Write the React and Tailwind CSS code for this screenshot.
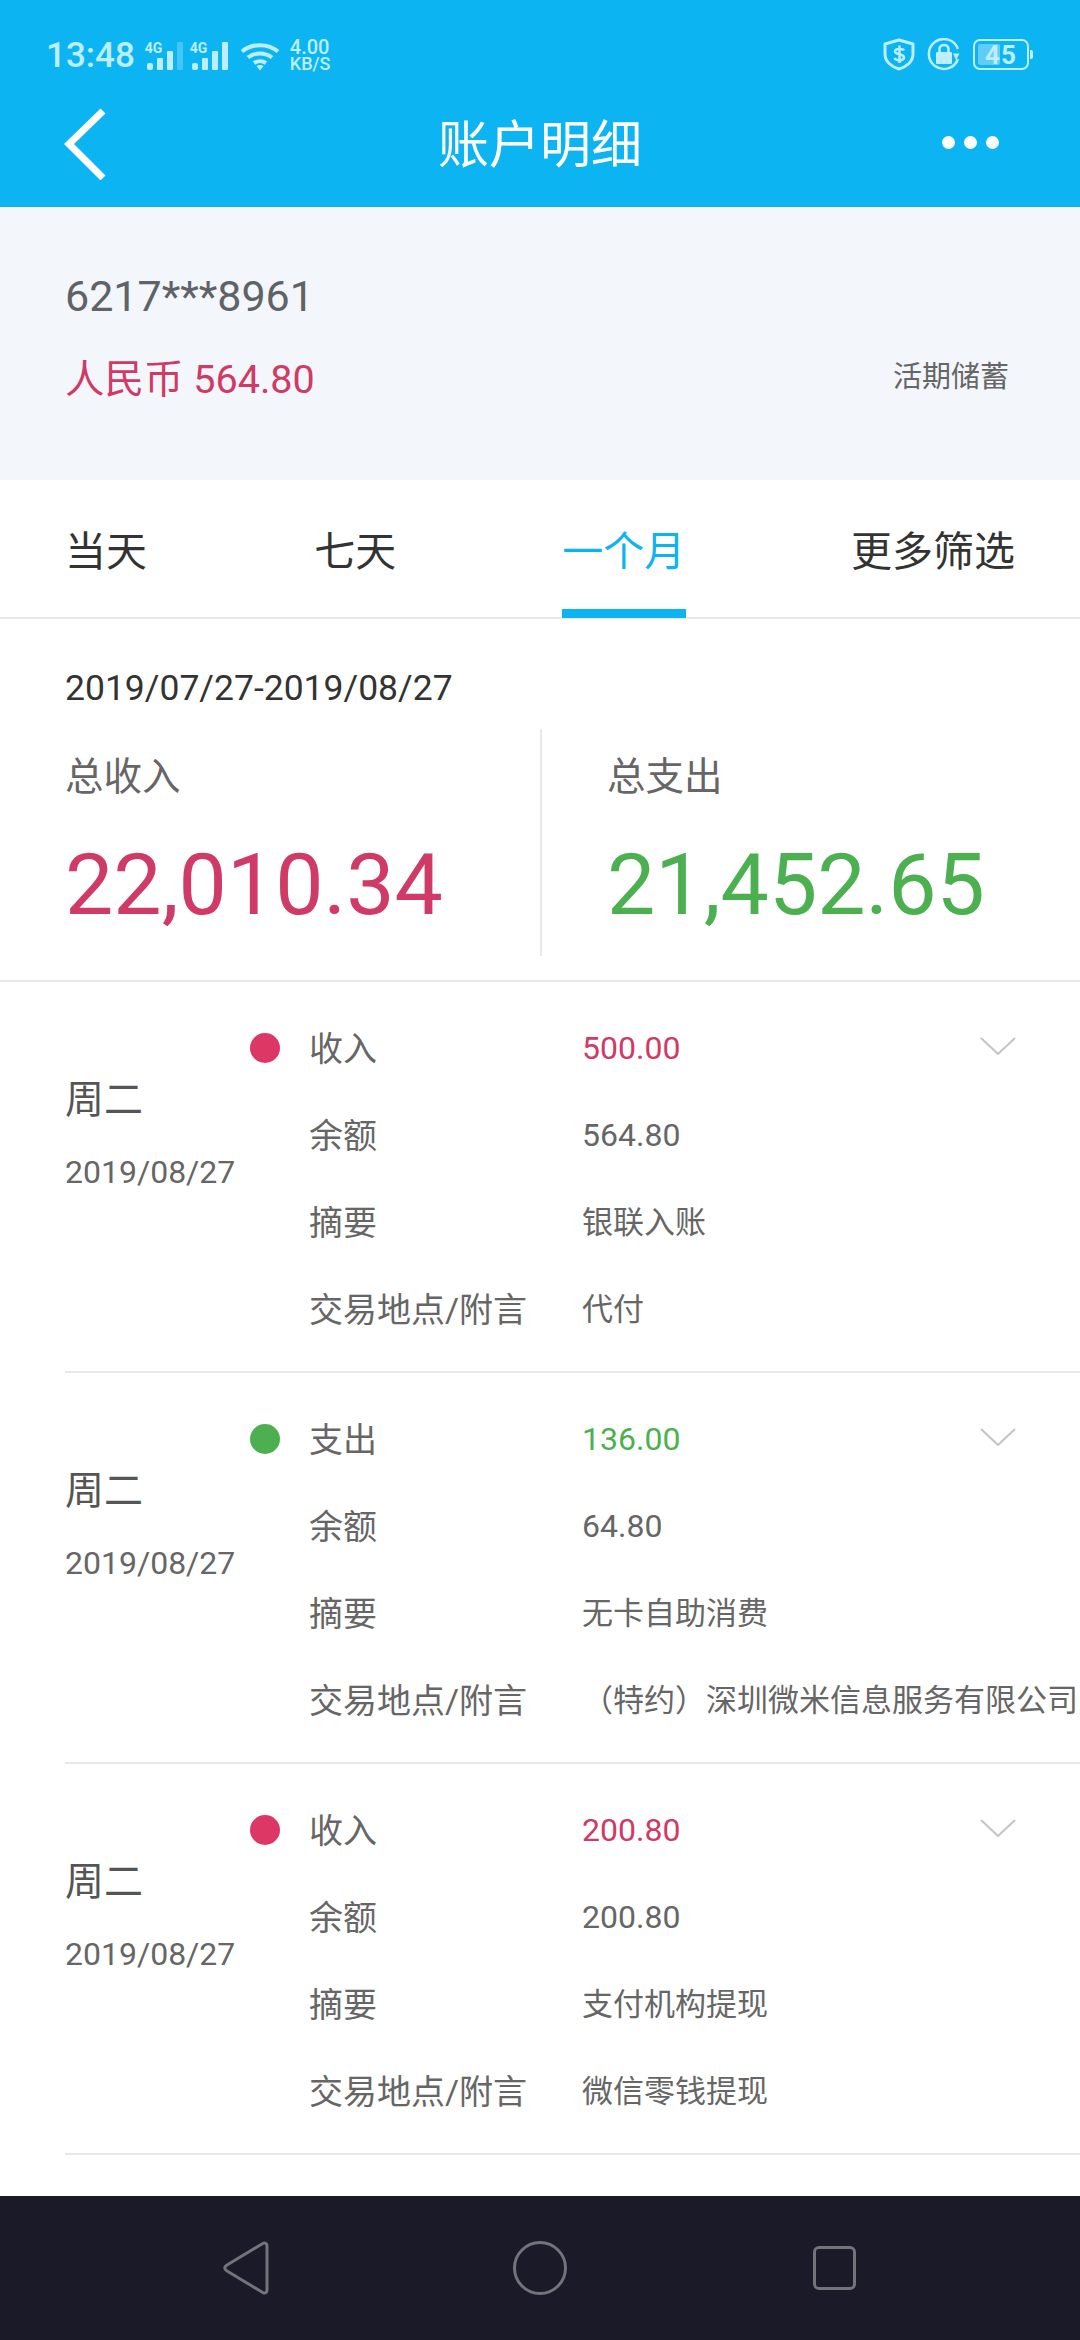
const FONT = "font-['Roboto','Noto_Sans_CJK_SC',sans-serif]";

function Signal({ faded }) {
  return (
    <div className="relative w-[38px] h-[29px]">
      <span className="absolute left-[-1px] top-[-1px] text-[14px] leading-[14px] font-bold">4G</span>
      <svg className="absolute left-0 top-0" width="38" height="29" viewBox="0 0 38 29" fill="currentColor">
        <rect x="1" y="21" width="6" height="7" rx="2" />
        <rect x="11" y="16" width="6" height="12" rx="1" />
        <rect x="21" y="9" width="6" height="19" rx="1" />
        <rect x="31" y="0" width="6" height="28" rx="1" opacity={faded ? 0.3 : 1} />
      </svg>
    </div>
  );
}

function Wifi() {
  return (
    <svg width="40" height="29" viewBox="0 0 40 29" fill="none" stroke="currentColor" strokeWidth="4">
      <path d="M2 9.500C12 1 28 1 38 9.500" />
      <path d="M8 15.500C15 10 25 10 32 15.500" />
      <path d="M14 21C17.500 18.500 22.500 18.500 26 21" />
      <path d="M16.500 24L20 28.500L23.500 24C21.500 22.500 18.500 22.500 16.500 24Z" fill="currentColor" stroke="none" />
    </svg>
  );
}

function StatusBar() {
  return (
    <div className="h-[75px] pl-[46px] pr-[47px] flex items-end pb-[4px] text-[#bdeeff]">
      <span className="text-[35px] leading-[35px] font-medium mb-[-2px]">13:48</span>
      <div className="ml-[11px] flex gap-[7px]">
        <Signal faded />
        <Signal />
      </div>
      <div className="ml-[11px]"><Wifi /></div>
      <div className="ml-[10px] flex flex-col font-medium leading-none">
        <span className="text-[20px] leading-[18px]">4.00</span>
        <span className="text-[18px] leading-[15px]">KB/S</span>
      </div>
      <div className="ml-auto flex items-center gap-[12px]">
        <svg width="32" height="33" viewBox="0 0 32 33" fill="none" stroke="currentColor" strokeWidth="3">
          <path d="M16 2L30 6V16C30 24 23 29 16 31C9 29 2 24 2 16V6Z" strokeLinejoin="round" />
          <path d="M21 12.500C20 10.500 12 10 12 13.500C12 17 21 15.500 21 19.500C21 23 13 23 11.500 20M16.500 7.500V25" strokeWidth="2.500" />
        </svg>
        <svg width="34" height="33" viewBox="0 0 34 33" fill="none" stroke="currentColor" strokeWidth="2.500">
          <path d="M31 21A15 15 0 1 1 31 11" />
          <path d="M29 22L32.500 15.500H26Z" fill="currentColor" stroke="none" />
          <rect x="9" y="14" width="16" height="12" rx="1" fill="currentColor" stroke="none" />
          <path d="M12.500 14V11C12.500 5.500 21.500 5.500 21.500 11V14" />
        </svg>
        <div className="flex items-center">
          <div className="relative w-[56px] h-[31px] rounded-[7px] border-2 border-current flex items-center justify-center">
            <div className="absolute left-[3px] top-[3px] bottom-[3px] w-[22px] bg-[#5fcdf8] rounded-[2px]" />
            <span className="relative text-[26px] leading-none font-bold tracking-[1px]">45</span>
          </div>
          <div className="w-[3px] h-[9px] bg-current rounded-r-[2px] ml-[1px]" />
        </div>
      </div>
    </div>
  );
}

function Header() {
  return (
    <div className="bg-[#0cb5f2] h-[207px]">
      <StatusBar />
      <div className="relative h-[132px] flex items-center justify-center">
        <svg className="absolute left-[62px] top-[33px]" width="46" height="72" viewBox="0 0 46 72" fill="none" stroke="#fff" strokeWidth="7">
          <path d="M41 3L7 36L41 70" />
        </svg>
        <span className="text-white text-[51px] leading-none mt-[8px]">账户明细</span>
        <div className="absolute left-[942px] top-[61px] flex gap-[9px]">
          <span className="w-[13px] h-[13px] rounded-full bg-white" />
          <span className="w-[13px] h-[13px] rounded-full bg-white" />
          <span className="w-[13px] h-[13px] rounded-full bg-white" />
        </div>
      </div>
    </div>
  );
}

function Account() {
  return (
    <div className="h-[273px] bg-[#f3f6fa] px-[65px] pt-[64px]">
      <p className="text-[43px] leading-[50px] text-[#5f6368]">6217***8961</p>
      <div className="flex items-center justify-between mt-[34px]">
        <p className="text-[39.500px] leading-[50px] text-[#cf3a66]">人民币 564.80</p>
        <p className="text-[29px] leading-[40px] text-[#666] mr-[6px] mb-[6px]">活期储蓄</p>
      </div>
    </div>
  );
}

function Tabs() {
  return (
    <div className="h-[139px] border-b-2 border-[#e8e8e8] flex justify-between px-[65px] text-[41px] text-[#333] whitespace-nowrap">
      <div className="pt-[44px] leading-[56px] w-[82px] shrink-0">当天</div>
      <div className="pt-[44px] leading-[56px] ml-[2px]">七天</div>
      <div className="pt-[44px] leading-[56px] h-[138px] text-[#0cb5f2] border-b-[9px] border-[#0cb5f2] w-[124px] text-center">一个月</div>
      <div className="pt-[44px] leading-[56px]">更多筛选</div>
    </div>
  );
}

function Summary() {
  return (
    <div className="border-b-2 border-[#e8e8e8] h-[363px] pt-[44px]">
      <p className="pl-[65px] text-[35.500px] leading-[50px] text-[#333]">2019/07/27-2019/08/27</p>
      <div className="flex mt-[16px]">
        <div className="w-[475px] ml-[65px] h-[227px] pt-[23px]">
          <p className="text-[38.500px] leading-[50px] text-[#666]">总收入</p>
          <p className="text-[86px] leading-[100px] mt-[33px] text-[#cf3a66]">22,010.34</p>
        </div>
        <div className="border-l-2 border-[#e8e8e8] pl-[65px] h-[227px] pt-[23px]">
          <p className="text-[38.500px] leading-[50px] text-[#666]">总支出</p>
          <p className="text-[86px] leading-[100px] mt-[33px] text-[#4cb050]">21,452.65</p>
        </div>
      </div>
    </div>
  );
}

const rows = [
  { type: "收入", color: "text-[#cf3a66]", dot: "bg-[#dd3766]", amount: "500.00", balance: "564.80", note: "银联入账", place: "代付" },
  { type: "支出", color: "text-[#4cb050]", dot: "bg-[#4cb050]", amount: "136.00", balance: "64.80", note: "无卡自助消费", place: "（特约）深圳微米信息服务有限公司" },
  { type: "收入", color: "text-[#cf3a66]", dot: "bg-[#dd3766]", amount: "200.80", balance: "200.80", note: "支付机构提现", place: "微信零钱提现" },
];

function Line({ label, value, valueClass = "text-[#666] text-[31px]" }) {
  return (
    <div className="h-[87px] flex items-center">
      <span className="w-[273px] shrink-0 text-[34px] text-[#666]">{label}</span>
      <span className={`whitespace-nowrap ${valueClass}`}>{value}</span>
    </div>
  );
}

function Row({ row }) {
  return (
    <div className="ml-[65px] h-[391px] border-b-2 border-[#e8e8e8] flex">
      <div className="w-[185px] shrink-0 pt-[93px]">
        <p className="text-[39px] leading-[50px] text-[#555]">周二</p>
        <p className="text-[32px] leading-[50px] mt-[22px] text-[#666]">2019/08/27</p>
      </div>
      <div className="w-[59px] shrink-0 pt-[51px]">
        <div className={`w-[30px] h-[30px] rounded-full ${row.dot}`} />
      </div>
      <div className="relative flex-1 pt-[24px]">
        <Line label={row.type} value={row.amount} valueClass={`text-[32px] mb-[3px] ${row.color}`} />
        <Line label="余额" value={row.balance} valueClass="text-[32px] mb-[3px] text-[#666]" />
        <Line label="摘要" value={row.note} />
        <Line label="交易地点/附言" value={row.place} />
        <svg className="absolute left-[671px] top-[55px]" width="36" height="18" viewBox="0 0 36 18" fill="none" stroke="#c4c4c4" strokeWidth="2">
          <path d="M1 1L18 17L35 1" />
        </svg>
      </div>
    </div>
  );
}

function NavBar() {
  return (
    <div className="mt-auto h-[144px] bg-[#1a1a28] flex items-start">
      <svg className="ml-[222px] mt-[44px]" width="48" height="56" viewBox="0 0 48 56" fill="none" stroke="#73737c" strokeWidth="3">
        <path d="M40 4C42 2 45 3 45 6V50C45 53 42 54 40 52L5 31C2 29 2 27 5 25Z" strokeLinejoin="round" />
      </svg>
      <div className="ml-[243px] mt-[45px] w-[54px] h-[54px] rounded-full border-[3px] border-[#73737c]" />
      <div className="ml-[246px] mt-[50px] w-[43px] h-[44px] rounded-[6px] border-[3px] border-[#73737c]" />
    </div>
  );
}

export default function App() {
  return (
    <div className={`w-[1080px] h-[2340px] bg-white flex flex-col overflow-hidden ${FONT}`}>
      <Header />
      <Account />
      <Tabs />
      <Summary />
      {rows.map((row, i) => (
        <Row key={i} row={row} />
      ))}
      <NavBar />
    </div>
  );
}
